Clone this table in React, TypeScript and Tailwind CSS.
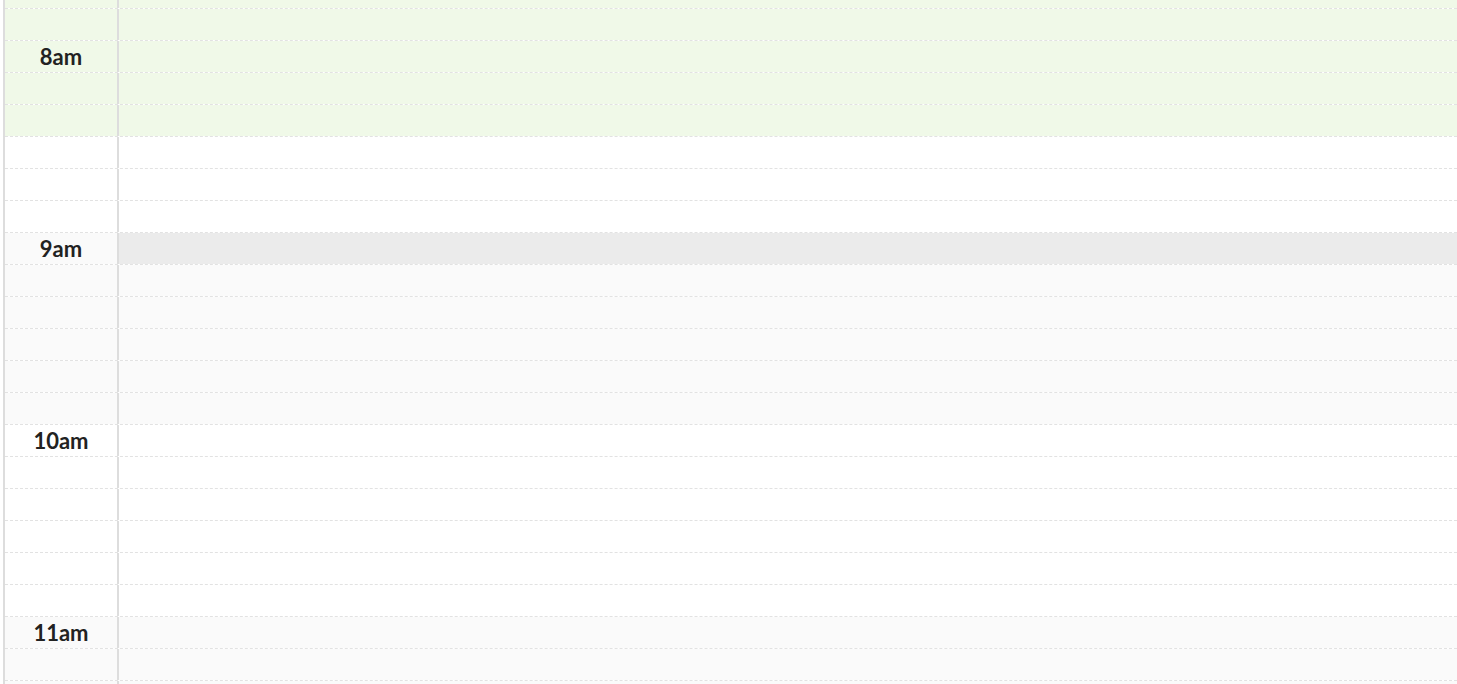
import React from 'react';

type Slot = {
  label?: string;
  left: string;
  right: string;
  first?: boolean;
};

const GREEN = 'bg-[#f0f9e8]';
const WHITE = 'bg-white';
const LIGHT = 'bg-[#fafafa]';
const HOVER = 'bg-[#ebebeb]';

const slots: Slot[] = [
  { left: GREEN, right: GREEN, first: true },
  { left: GREEN, right: GREEN },
  { label: '8am', left: GREEN, right: GREEN },
  { left: GREEN, right: GREEN },
  { left: GREEN, right: GREEN },
  { left: WHITE, right: WHITE },
  { left: WHITE, right: WHITE },
  { left: WHITE, right: WHITE },
  { label: '9am', left: LIGHT, right: HOVER },
  { left: LIGHT, right: LIGHT },
  { left: LIGHT, right: LIGHT },
  { left: LIGHT, right: LIGHT },
  { left: LIGHT, right: LIGHT },
  { left: LIGHT, right: LIGHT },
  { label: '10am', left: WHITE, right: WHITE },
  { left: WHITE, right: WHITE },
  { left: WHITE, right: WHITE },
  { left: WHITE, right: WHITE },
  { left: WHITE, right: WHITE },
  { left: WHITE, right: WHITE },
  { label: '11am', left: LIGHT, right: LIGHT },
  { left: LIGHT, right: LIGHT },
  { left: LIGHT, right: LIGHT },
];

export default function App() {
  return (
    <div className="h-[684px] overflow-hidden bg-white font-['Lato',sans-serif]">
      <div className="ml-[3px] flex flex-col border-l-2 border-[#dddddd]">
        {slots.map((s, i) => (
          <div
            key={i}
            className={`flex shrink-0 border-b border-dashed border-[#e2e2e2] ${s.first ? 'h-[9px]' : 'h-[32px]'}`}
          >
            <div
              className={`flex w-[114px] shrink-0 items-center justify-center border-r-2 border-solid border-r-[#dddddd] pt-[1px] text-[22px] leading-none font-bold text-[#222222] ${s.left}`}
            >
              {s.label}
            </div>
            <div className={`flex-1 ${s.right}`} />
          </div>
        ))}
      </div>
    </div>
  );
}
